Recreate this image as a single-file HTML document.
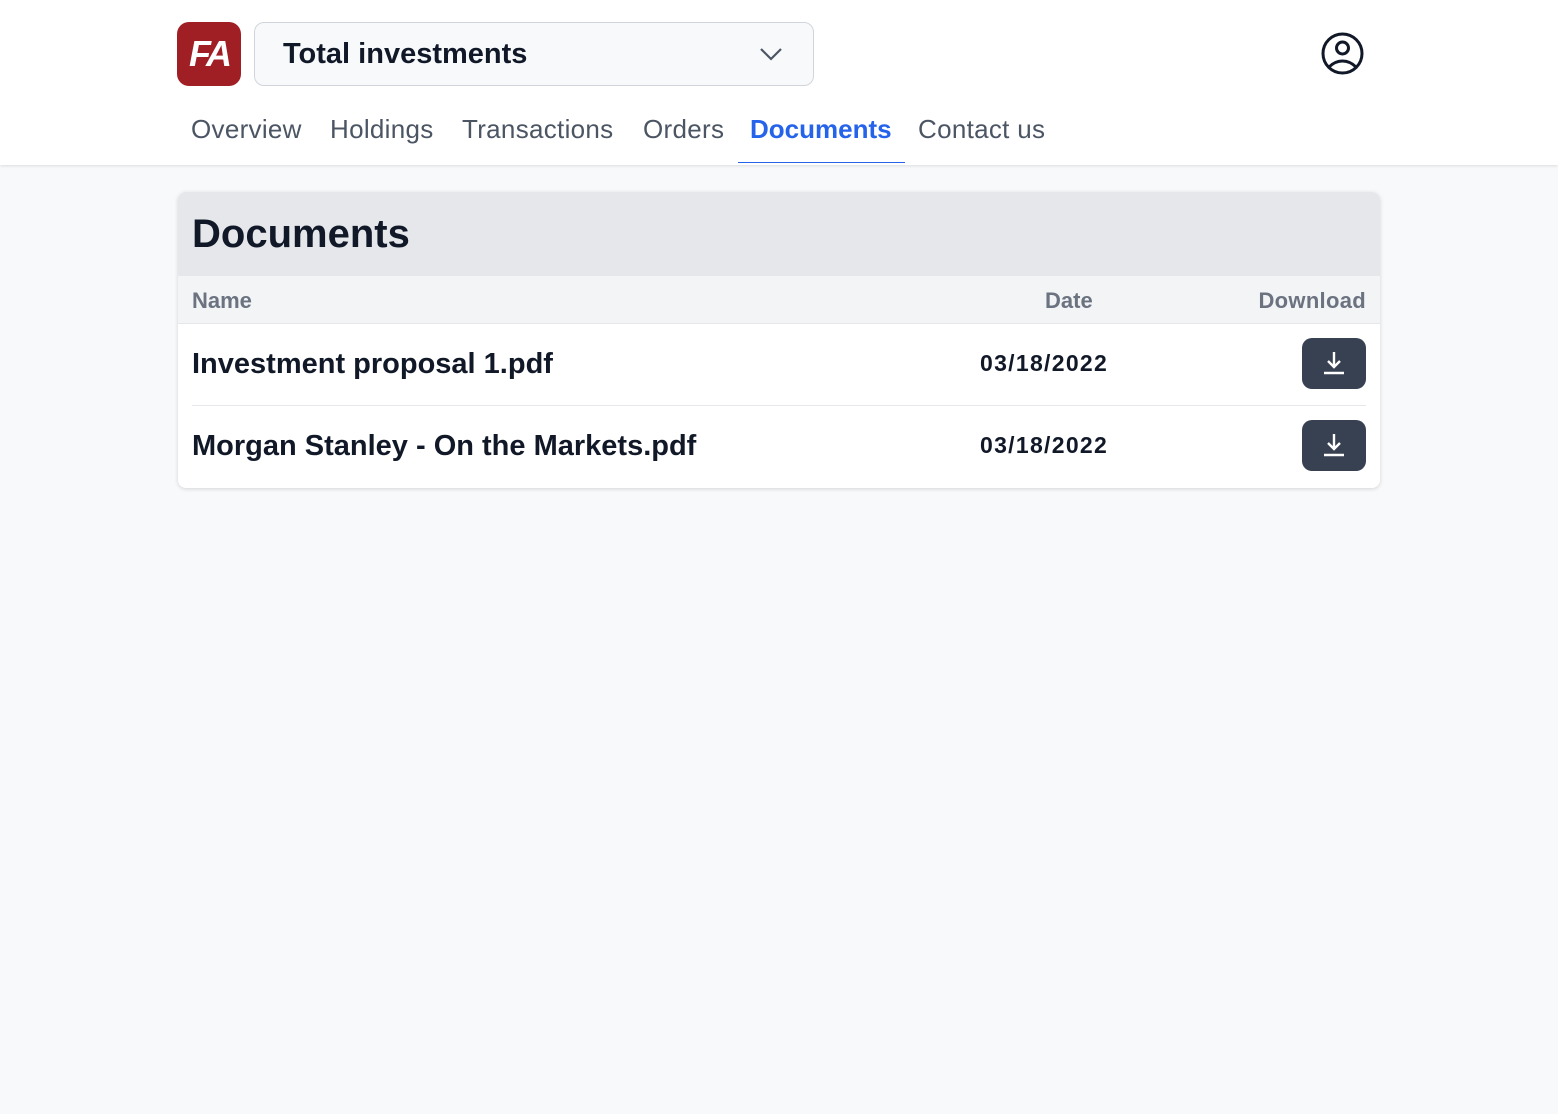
<!DOCTYPE html>
<html><head><meta charset="utf-8"><style>
*{box-sizing:border-box;margin:0;padding:0}
body{width:1558px;height:1114px;background:#f8f9fb;font-family:"Liberation Sans",sans-serif;color:#111827;position:relative;overflow:hidden}
.hdr{position:absolute;left:0;top:0;width:1558px;height:165px;background:#fff;box-shadow:0 1px 3px rgba(0,0,0,.12)}
.logo{position:absolute;left:177px;top:22px;width:64px;height:64px;background:#a01f24;border-radius:12px;color:#fff;font-weight:bold;font-size:36px;letter-spacing:-3px;text-align:center;line-height:64px;font-style:italic}
.sel{position:absolute;left:254px;top:22px;width:560px;height:64px;border:1px solid #d1d5db;border-radius:10px;background:#f8f9fb}
.sel span{position:absolute;left:28px;top:15px;font-size:29px;font-weight:bold}
.sel svg{position:absolute;right:30px;top:22px}
.user{position:absolute;left:1321px;top:32px}
.nav{position:absolute;top:114px;font-size:26px;color:#4b5563;letter-spacing:.3px}
.nav.act{color:#2563eb;font-weight:bold;letter-spacing:0}
.ul{position:absolute;left:738px;top:162px;width:167px;height:1px;background:#2563eb}
.card{position:absolute;left:178px;top:192px;width:1202px;height:296px;background:#fff;border-radius:8px;box-shadow:0 1px 4px rgba(0,0,0,.15);overflow:hidden}
.t{position:absolute;left:0;top:0;width:100%;height:84px;background:#e5e7eb}
.t h1{position:absolute;left:14px;top:20px;font-size:40px}
.th{position:absolute;left:0;top:84px;width:100%;height:48px;background:#f3f4f6;border-bottom:1px solid #e5e7eb;font-size:22px;font-weight:bold;color:#6b7280}
.th span{position:absolute;top:12px}
.row{position:absolute;left:14px;width:1174px;height:82px;font-weight:bold}
.row .n{position:absolute;left:0;top:24px;font-size:29px}
.row .d{position:absolute;left:788px;top:26px;font-size:23px;letter-spacing:1.3px}
.btn{position:absolute;right:0;top:14px;width:64px;height:51px;background:#374151;border-radius:10px}
.btn svg{position:absolute;left:20px;top:13px}
.sep{position:absolute;left:14px;top:213px;width:1174px;height:1px;background:#e5e7eb}
</style></head><body>
<div class="hdr">
<div class="logo">FA</div>
<div class="sel"><span>Total investments</span><svg width="24" height="16" viewBox="0 0 24 16"><path d="M2 4l10 10 10-10" fill="none" stroke="#4b5563" stroke-width="2.2"/></svg></div>
<svg class="user" width="43" height="43" viewBox="0 0 43 43" fill="none" stroke="#111827" stroke-width="3"><circle cx="21.5" cy="21.5" r="19.5"/><circle cx="21.5" cy="16" r="6"/><path d="M8 35c8-8 19-8 27 0"/></svg>
<span class="nav" style="left:191px">Overview</span>
<span class="nav" style="left:330px">Holdings</span>
<span class="nav" style="left:462px">Transactions</span>
<span class="nav" style="left:643px">Orders</span>
<span class="nav act" style="left:750px">Documents</span>
<span class="nav" style="left:918px">Contact us</span>
<div class="ul"></div>
</div>
<div class="card">
<div class="t"><h1>Documents</h1></div>
<div class="th"><span style="left:14px">Name</span><span style="left:867px">Date</span><span style="right:14px;letter-spacing:.3px">Download</span></div>
<div class="row" style="top:132px"><span class="n">Investment proposal 1.pdf</span><span class="d">03/18/2022</span><div class="btn"><svg width="24" height="24" viewBox="0 0 24 24" fill="none" stroke="#fff" stroke-width="2.4"><path d="M12 1v14M6 10l6 6 6-6M2 22h20"/></svg></div></div>
<div class="sep"></div>
<div class="row" style="top:214px"><span class="n">Morgan Stanley - On the Markets.pdf</span><span class="d">03/18/2022</span><div class="btn"><svg width="24" height="24" viewBox="0 0 24 24" fill="none" stroke="#fff" stroke-width="2.4"><path d="M12 1v14M6 10l6 6 6-6M2 22h20"/></svg></div></div>
</div>
</body></html>
